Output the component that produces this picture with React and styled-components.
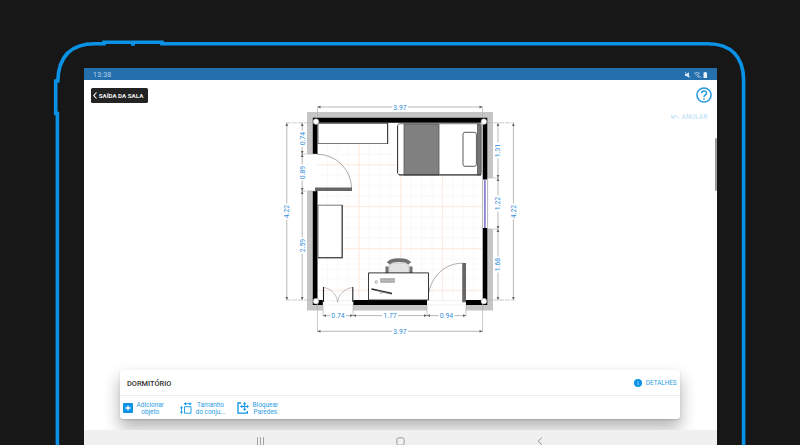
import React from "react";
import styled, { createGlobalStyle } from "styled-components";

const BLUE = "#0a93e6";

const Global = createGlobalStyle`
  * { box-sizing: border-box; }
  html, body { margin: 0; padding: 0; background: #171717; overflow: hidden; }
`;

const Stage = styled.main`
  position: relative;
  width: 800px;
  height: 445px;
  overflow: hidden;
  background: #171717;
  padding: 68px 84px 0;
  font-family: Roboto, "Liberation Sans", sans-serif;
`;

const Bezel = styled.svg`
  position: absolute;
  inset: 0;
`;

const Screen = styled.section`
  position: relative;
  display: flex;
  flex-direction: column;
  width: 632.5px;
  height: 377px;
  background: #fff;
`;

const StatusBar = styled.header`
  display: flex;
  align-items: center;
  justify-content: space-between;
  flex: none;
  height: 12px;
  padding: 1px 9px 0;
  background: #256fac;
  color: #b5d5ef;
  font-size: 7px;
  letter-spacing: 0.2px;
`;

const StatusIcons = styled.svg`
  display: block;
`;

const Workspace = styled.div`
  flex: 1;
  min-height: 0;
  display: grid;
  grid-template-columns: 182px 268px 1fr;
  grid-template-rows: 290px 1fr;
  overflow: hidden;
`;

const LeftTools = styled.div`
  padding: 7.5px 0 0 6.7px;
`;

const ExitButton = styled.button`
  display: flex;
  align-items: center;
  gap: 2px;
  width: 57px;
  height: 15.5px;
  padding: 1px 0 0 2px;
  border: 0;
  border-radius: 1.5px;
  background: #232323;
  color: #f2f2f2;
  font: 700 6.2px Roboto, sans-serif;
  white-space: nowrap;
`;

const RightTools = styled.div`
  display: flex;
  flex-direction: column;
  align-items: flex-end;
  padding: 7px 5px 0 0;
`;

const UndoButton = styled.button`
  display: flex;
  align-items: center;
  gap: 2px;
  margin: 9.5px 4px 0 0;
  padding: 0;
  border: 0;
  background: none;
  color: #b9def5;
  font: 400 6.8px/9px Roboto, sans-serif;
`;

const Plan = styled.svg`
  display: block;
  text {
    font: 400 6.8px Roboto, sans-serif;
    letter-spacing: 0.05px;
    fill: #3390dc;
    text-anchor: middle;
  }
`;

const Card = styled.section`
  grid-column: 1 / -1;
  width: 560px;
  height: 49px;
  margin-left: 36px;
  border-radius: 3px;
  background: #fff;
  box-shadow: 0 1px 2px rgba(0, 0, 0, 0.14), 0 9px 16px 1px rgba(0, 0, 0, 0.28);
`;

const CardHead = styled.div`
  display: flex;
  align-items: center;
  justify-content: space-between;
  height: 26px;
  padding: 1px 3.5px 0 7px;
  border-bottom: 1px solid #ececec;
`;

const RoomName = styled.h1`
  margin: 0;
  color: #303030;
  font-size: 7.4px;
  font-weight: 500;
`;

const Details = styled.button`
  display: flex;
  align-items: center;
  gap: 3.5px;
  padding: 0;
  border: 0;
  background: none;
  color: #2d9ee4;
  font: 400 6.4px Roboto, sans-serif;
  letter-spacing: -0.05px;
`;

const Actions = styled.div`
  display: flex;
  height: 24px;
  padding-left: 3px;
`;

const Action = styled.button`
  display: flex;
  align-items: center;
  gap: 3.5px;
  width: ${(p) => p.$width}px;
  padding: 0;
  border: 0;
  background: none;
  color: #2d9ee4;
  font: 400 6.5px/7.5px Roboto, sans-serif;
  text-align: center;
  white-space: pre;
`;

const ActionLabel = styled.span`
  padding-top: 2px;
`;

const NavBar = styled.nav`
  flex: none;
  display: flex;
  justify-content: space-between;
  height: 15px;
  padding: 7px 174px 0 172px;
  background: #f0f0f0;
`;

const ScrollThumb = styled.i`
  position: absolute;
  right: 0;
  top: 70px;
  width: 2px;
  height: 53px;
  border-radius: 1px;
  background: #9a9a9a;
`;

const H = ({ a, b, y, label }) => {
  const m = (a + b) / 2;
  return (
    <g>
      <path d={`M${a} ${y}H${m - 8}M${m + 8} ${y}H${b}`} stroke="#a5a5a5" strokeWidth=".8" />
      <path d={`M${a} ${y}l3-1.4v2.8zM${b} ${y}l-3-1.4v2.8z`} fill="#666" />
      <text x={m} y={y + 2.5}>{label}</text>
    </g>
  );
};

const V = ({ a, b, x, label }) => {
  const m = (a + b) / 2;
  return (
    <g>
      <path d={`M${x} ${a}V${m - 8}M${x} ${m + 8}V${b}`} stroke="#a5a5a5" strokeWidth=".8" />
      <path d={`M${x} ${a}l-1.4 3h2.8zM${x} ${b}l-1.4-3h2.8z`} fill="#666" />
      <text transform={`translate(${x + 2.4} ${m}) rotate(-90)`}>{label}</text>
    </g>
  );
};

const steps = (from, to, step) => {
  const out = [];
  for (let v = from; v < to; v += step) out.push(v);
  return out;
};

function FloorPlan() {
  return (
    <Plan width="268" height="290" viewBox="266 80 268 290" fill="none">
      <g stroke="#fbf6f2" strokeWidth=".8">
        {steps(327.5, 482, 10.45).map((x) => <path key={x} d={`M${x} 123V300`} />)}
        {steps(133.4, 300, 10.45).map((y) => <path key={y} d={`M317 ${y}H482`} />)}
      </g>
      <g stroke="#fcebe0" strokeWidth="1">
        {[359, 400.8, 442.6].map((x) => <path key={x} d={`M${x} 123V300`} />)}
        {[164.8, 206.7, 248.7, 290.7].map((y) => <path key={y} d={`M317 ${y}H482`} />)}
      </g>
      <g fill="#c6c6c6">
        <path d="M307 112H493V178H487V118H313V154H307zM307 191H313V305H323V310.5H307zM353 305H427V310.5H353zM466 305H487V229H493V310.5H466z" />
      </g>
      <g fill="#000">
        <path d="M312.8 117.7H487.3V179.5H482.7V122.7H317.5V154H312.8zM312.8 191H317.5V300H322.8V305H312.8zM353.3 300H427V305H353.3zM466 300H482.7V228H487.3V305H466z" />
      </g>
      <path d="M323 300.5H353M323 305H353M427 300.5H466M427 305H466" stroke="#e6e6e6" strokeWidth=".6" />
      <path d="M482.6 179.5V228M487.6 179.5V228" stroke="#999" strokeWidth=".7" />
      <path d="M484.9 179.5V228" stroke="#6a62c8" strokeWidth="1.4" />

      <g stroke="#555" strokeWidth=".8" fill="#fff">
        <path d="M318 123.5H387.5V143.5H318z" />
        <path d="M318 205.2H342.2V257.6H318z" />
        <rect x="397.5" y="123.7" width="83.5" height="51.2" rx="2.5" />
        <path d="M404 124H439V175H404z" fill="#808080" />
        <path d="M477.5 124H481V175H477.5z" fill="#777" />
        <rect x="463" y="132.3" width="13.4" height="34" rx="2" stroke="#333" />
      </g>
      <path d="M342.2 205V258M318 257.8H342.5M387.7 123V144M399 174.9H481M397.6 126V173" stroke="#333" />

      <path d="M317 154.2A34.6 34.6 0 0 1 351.6 188" stroke="#888" strokeWidth=".7" />
      <path d="M315 187.5H352V191H315z" fill="#666" />
      <path d="M428 299C429 279 443 263 463 263.2" stroke="#888" strokeWidth=".7" />
      <path d="M462.2 263H466V302.3H462.2z" fill="#666" />
      <path d="M324 287.5C332 289 337 295 337.6 302.5C338 295 344 289 352 287.5" stroke="#999" strokeWidth=".6" />
      <path d="M323.5 287V302M352.8 287V302" stroke="#222" strokeWidth="1.1" />

      <path d="M389 273V266Q389 263 393 263H406Q409 263 409 266V273z" fill="#e2e2e2" stroke="#aaa" strokeWidth=".5" />
      <path d="M388.5 263.5C391 259 407 259 409.5 263.5" stroke="#6f6f6f" strokeWidth="3.8" />
      <path d="M387 266.5V273M411 266.5V273" stroke="#6f6f6f" strokeWidth="3" />
      <path d="M368.5 272.9H428.5V300H368.5z" fill="#fff" stroke="#222" strokeWidth=".9" />
      <path d="M380 278H395V283H380z" fill="#bbb" />
      <path d="M381 279.5H394M381 281.5H394" stroke="#999" strokeWidth=".6" strokeDasharray="1 .5" />
      <ellipse cx="376.3" cy="282" rx="1.1" ry="1.4" stroke="#777" strokeWidth=".6" />
      <path d="M371.5 289L392 293.5" stroke="#222" strokeWidth="1.3" />
      <path d="M377 290.5L391.5 294.2M380 293.7L382.5 292" stroke="#777" strokeWidth=".8" />

      <g fill="#fff" stroke="#888" strokeWidth=".5">
        <circle cx="316" cy="121.6" r="2.9" />
        <circle cx="483.9" cy="121.6" r="2.9" />
        <circle cx="316" cy="301.2" r="2.9" />
        <circle cx="483.9" cy="301.2" r="2.9" />
      </g>

      <g stroke="#aaa" strokeWidth=".6">
        <path d="M317.5 107V118M482.5 107V118M317.5 304V332M482.5 304V332M323 305V316M353 305V316M427 305V316M466 305V316" />
        <path d="M286 122.8H314M286 300H314M301 154H316M301 191H316M487 122.8H514M487 300H514M487 178H499M487 229H499" strokeDasharray="5 1" />
      </g>
      <H a={317.5} b={482.5} y={107} label="3.97" />
      <H a={317.5} b={482.5} y={331.3} label="3.97" />
      <H a={323} b={353} y={315.6} label="0.74" />
      <H a={353} b={427} y={315.6} label="1.77" />
      <H a={427} b={466} y={315.6} label="0.94" />
      <V a={123} b={300} x={286.8} label="4.22" />
      <V a={123} b={154} x={302.2} label="0.74" />
      <V a={154} b={191} x={302.2} label="0.89" />
      <V a={191} b={300} x={302.2} label="2.59" />
      <V a={123} b={178} x={498} label="1.31" />
      <V a={178} b={229} x={498} label="1.22" />
      <V a={229} b={300} x={498} label="1.68" />
      <V a={123} b={300} x={513.4} label="4.22" />
    </Plan>
  );
}

export default function App() {
  return (
    <Stage>
      <Global />
      <Bezel width="800" height="445" fill="none" stroke={BLUE} strokeWidth="3.6">
        <path d="M57.4 445V113.5H55.7V81H57.8C58.5 57 70 43.7 95 43.7H104V42.2H162V43.7H708C731 43.7 743.6 57 743.6 80V445M131 44H135" />
      </Bezel>
      <Screen>
        <StatusBar>
          <span>13:38</span>
          <StatusIcons width="24" height="8" fill="none">
            <path d="M1 3h1.5L5 1.2v5.6L2.5 5H1z" fill="#d5e7f5" />
            <path d="M1 1l5 5.5" stroke="#d5e7f5" strokeWidth=".8" />
            <path d="M10 2.5q3-2 6 0M11.5 4.2q2-1.2 3.5 0L13 6.2M14 6h3" stroke="#9fc4e2" />
            <path d="M19.5 1.5h1V1h1.5v.5h1V7h-3.5z" fill="#e6f1fa" />
          </StatusIcons>
        </StatusBar>
        <Workspace>
          <LeftTools>
            <ExitButton>
              <svg width="4" height="7" fill="none" stroke="#fff" strokeWidth="1.1"><path d="M3.5.5L.8 3.5l2.7 3" /></svg>
              SAÍDA DA SALA
            </ExitButton>
          </LeftTools>
          <FloorPlan />
          <RightTools>
            <svg width="16" height="16" fill="none" stroke="#2499e2">
              <circle cx="8" cy="8" r="7.1" strokeWidth="1.5" />
              <path d="M5.6 6.3C5.6 3.1 10.5 3.1 10.5 6.2C10.5 8 8 7.9 8 10" strokeWidth="1.5" />
              <path d="M8 11.2V12.7" strokeWidth="1.6" />
            </svg>
            <UndoButton>
              <svg width="8" height="6" fill="none" stroke="currentColor"><path d="M.8.8V3.9H3.9M1.2 3.6C3 1 6 1.2 7.3 4.3" /></svg>
              ANULAR
            </UndoButton>
          </RightTools>
          <Card>
            <CardHead>
              <RoomName>DORMITÓRIO</RoomName>
              <Details>
                <svg width="8" height="8"><circle cx="4" cy="4" r="4" fill={BLUE} /><path d="M4 3.5V6M4 2V2.8" stroke="#d5effd" strokeWidth=".8" /></svg>
                DETALHES
              </Details>
            </CardHead>
            <Actions>
              <Action $width={57}>
                <svg width="10" height="10"><rect width="10" height="10" rx="1" fill={BLUE} /><path d="M5 2.4V7.6M2.4 5H7.6" stroke="#fff" strokeWidth="1.3" /></svg>
                <ActionLabel>{"Adicionar\nobjeto"}</ActionLabel>
              </Action>
              <Action $width={57}>
                <svg width="12" height="12" fill="none" stroke={BLUE} strokeWidth=".9">
                  <path d="M4.5 4.7H11V11.2H4.5zM4.5 1.8H11M1.5 5.5V11" />
                  <path d="M3.7 1.8L6 .2V3.4zM11.8 1.8L9.5.2V3.4zM1.5 4L0 6.3H3zM1.5 12L0 9.7H3z" fill={BLUE} stroke="none" />
                </svg>
                <ActionLabel>{"Tamanho\ndo conju..."}</ActionLabel>
              </Action>
              <Action $width={57}>
                <svg width="12" height="12" fill="none" stroke={BLUE}>
                  <path d="M4 1H1V11.2H10.3V9" strokeWidth="1.3" />
                  <path d="M7.6 1.5V7.5M4.6 4.5H10.6" strokeWidth=".9" />
                  <path d="M7.6 0L9.3 2.2H5.9zM7.6 9L9.3 6.8H5.9zM3.1 4.5L5.3 2.8V6.2zM12 4.5L9.9 2.8V6.2z" fill={BLUE} stroke="none" />
                </svg>
                <ActionLabel>{"Bloquear\nParedes"}</ActionLabel>
              </Action>
            </Actions>
          </Card>
        </Workspace>
        <NavBar>
          <svg width="9" height="8" stroke="#9a9a9a" strokeWidth=".9"><path d="M1.5 0V8M4.5 0V8M7.5 0V8" /></svg>
          <svg width="9" height="9" fill="none" stroke="#9a9a9a"><rect x=".8" y=".8" width="7.4" height="7.4" rx="2" /></svg>
          <svg width="6" height="8" fill="none" stroke="#9a9a9a"><path d="M5 .7L1 4.2L5 7.7" /></svg>
        </NavBar>
        <ScrollThumb />
      </Screen>
    </Stage>
  );
}
